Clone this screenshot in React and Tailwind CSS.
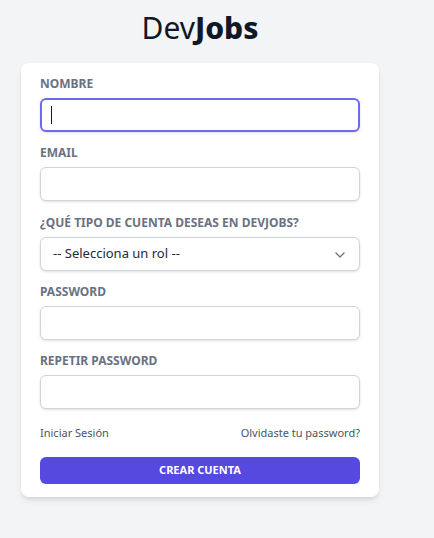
import { ChevronDown } from "lucide-react"

const font = { fontFamily: '"Noto Sans", "Open Sans", sans-serif' }

function Field({ label, type = "text", focused = false }) {
  return (
    <div>
      <label className="block text-xs font-bold uppercase text-gray-500 mb-1.5">{label}</label>
      <div className="relative">
        <input
          type={type}
          className={
            "block w-full h-[34px] rounded-md bg-white px-3 text-sm outline-none shadow-sm " +
            (focused ? "border-2 border-[#6f6be8]" : "border border-gray-300")
          }
        />
        {focused && <span className="absolute left-[11px] top-[8px] w-px h-[18px] bg-gray-900" />}
      </div>
    </div>
  )
}

export default function App() {
  return (
    <div className="min-h-[538px] bg-gray-100" style={font}>
      <div className="w-[400px] pt-[10px]">
        <h1 className="text-center text-[30px] leading-9 text-gray-900">
          Dev<span className="font-extrabold">Jobs</span>
        </h1>
        <div className="ml-[21px] mt-[17px] w-[358px] bg-white rounded-lg shadow-md px-[19px] pt-[13px] pb-[13px]">
          <div className="flex flex-col gap-[13px]">
            <Field label="Nombre" focused />
            <Field label="Email" type="email" />
            <div className="mt-px">
              <label className="block text-xs font-bold uppercase text-gray-500 mb-1.5">¿Qué tipo de cuenta deseas en DevJobs?</label>
              <div className="relative">
                <select className="block w-full h-[34px] appearance-none rounded-md border border-gray-300 bg-white pl-3 pr-8 text-[13px] text-gray-800 shadow-sm outline-none">
                  <option>-- Selecciona un rol --</option>
                </select>
                <ChevronDown className="absolute right-[12px] top-[10px] w-4 h-4 text-gray-500 pointer-events-none" strokeWidth={2} />
              </div>
            </div>
            <Field label="Password" type="password" />
            <Field label="Repetir Password" type="password" />
          </div>
          <div className="flex justify-between mt-4 text-[11px] leading-4 text-gray-600">
            <a href="#">Iniciar Sesión</a>
            <a href="#">Olvidaste tu password?</a>
          </div>
          <button className="mt-4 w-full h-[27px] rounded-md bg-[#5549df] text-white text-[11px] font-bold uppercase">
            Crear cuenta
          </button>
        </div>
      </div>
    </div>
  )
}
